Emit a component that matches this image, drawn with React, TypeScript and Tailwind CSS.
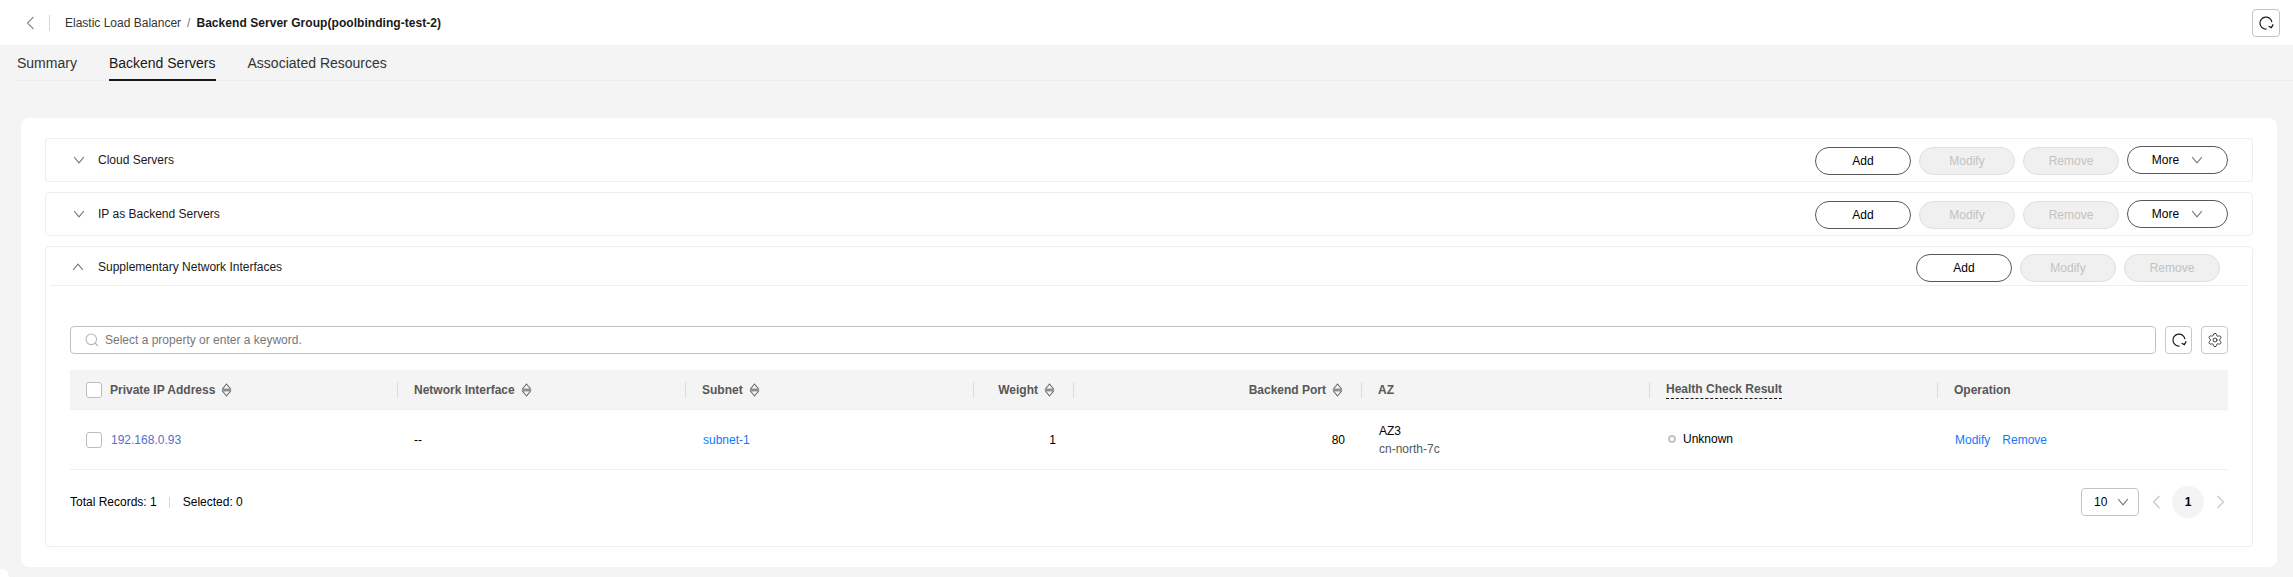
import { Settings } from "lucide-react";

const font = "font-['Liberation_Sans',Arial,sans-serif]";

function Chevron({ dir = "down", className = "" }: { dir?: "down" | "up"; className?: string }) {
  return (
    <svg width="12" height="8" viewBox="0 0 12 8" fill="none" className={className}>
      <path
        d={dir === "down" ? "M1.2 1.2 L6 6.8 L10.8 1.2" : "M1.2 6.8 L6 1.2 L10.8 6.8"}
        stroke="#7a7a7a"
        strokeWidth="1.1"
      />
    </svg>
  );
}

function Side({ dir, color }: { dir: "left" | "right"; color: string }) {
  return (
    <svg width="9" height="14" viewBox="0 0 9 14" fill="none">
      <path d={dir === "left" ? "M7.5 1 L1.5 7 L7.5 13" : "M1.5 1 L7.5 7 L1.5 13"} stroke={color} strokeWidth="1.1" />
    </svg>
  );
}

function Refresh() {
  return (
    <svg width="16" height="16" viewBox="0 0 16 16" fill="none">
      <path d="M13.9 7.2 A6 6 0 1 0 8.6 14" stroke="#191919" strokeWidth="1.2" />
      <path d="M15.2 9.4 L13.4 12.6 L10.6 11.2" stroke="#191919" strokeWidth="1.2" />
    </svg>
  );
}

function SortIcon() {
  return (
    <svg width="11" height="14" viewBox="0 0 11 14" fill="none" className="shrink-0">
      <path d="M1 6.5 L5.5 1 L10 6.5" stroke="#666" strokeWidth="1.1" />
      <path d="M1 7.5 L5.5 13 L10 7.5" stroke="#666" strokeWidth="1.1" />
      <rect x="1.5" y="5.6" width="8" height="2.8" fill="#8c8c8c" />
    </svg>
  );
}

function Btn({ label, disabled = false, className = "" }: { label: string; disabled?: boolean; className?: string }) {
  return (
    <button
      className={`h-7 w-[96px] rounded-full border text-xs ${
        disabled ? "border-[#dfdfdf] bg-[#f0f0f0] text-[#c2c2c2]" : "border-[#575757] bg-white text-black"
      } ${className}`}
    >
      {label}
    </button>
  );
}

function Actions({ more = false }: { more?: boolean }) {
  return (
    <div className="ml-auto flex items-start gap-2">
      <Btn label="Add" className="mt-px" />
      <Btn label="Modify" disabled className="mt-px" />
      <Btn label="Remove" disabled className="mt-px" />
      {more && (
        <button className="flex h-7 w-[101px] items-center justify-center gap-3 rounded-full border border-[#575757] bg-white text-xs text-black">
          More
          <Chevron />
        </button>
      )}
    </div>
  );
}

function HeadCell({ children, right = false, last = false }: { children: React.ReactNode; right?: boolean; last?: boolean }) {
  return (
    <div className="flex h-full items-center">
      <div
        className={`flex h-4 w-full items-center gap-[6px] text-xs font-bold text-[#575757] ${
          last ? "" : "border-r border-[#dcdcdc]"
        } ${right ? "justify-end pr-[18px]" : "pl-4"}`}
      >
        {children}
      </div>
    </div>
  );
}

function CheckBox() {
  return <div className="h-4 w-4 shrink-0 rounded-[3px] border border-[#bdbdbd] bg-white" />;
}

export default function App() {
  const cols = "grid grid-cols-[328px_288px_288px_100px_288px_288px_288px_290px]";

  return (
    <main className={`relative h-[577px] w-[2293px] overflow-hidden bg-[#f4f4f4] text-xs text-black ${font}`}>
      {/* Top bar */}
      <div className="flex h-[45px] items-center bg-white pl-[26px] pr-[13px]">
        <Side dir="left" color="#8a8a8a" />
        <div className="ml-[14px] h-4 w-px bg-[#d9d9d9]" />
        <div className="ml-[15px] flex items-center gap-[6px]">
          <span className="text-[#333]">Elastic Load Balancer</span>
          <span className="text-[#777]">/</span>
          <span className="font-bold tracking-[0.05px] text-[#191919]">Backend Server Group(poolbinding-test-2)</span>
        </div>
        <button className="ml-auto flex h-7 w-7 items-center justify-center rounded-[4px] border border-[#c4c4c4] bg-white">
          <Refresh />
        </button>
      </div>

      {/* Tabs */}
      <div className="ml-[17px] flex h-[36px] gap-[32px] border-b border-[#ececec] text-sm text-[#333]">
        <div className="flex h-[36px] items-center">Summary</div>
        <div className="flex h-[36px] items-center border-b-2 border-[#191919] pt-px text-[#191919]">Backend Servers</div>
        <div className="flex h-[36px] items-center">Associated Resources</div>
      </div>

      {/* Card */}
      <div className="ml-[21px] mt-[37px] h-[449px] w-[2256px] rounded-lg bg-white px-6 pt-5">
        <div className="flex flex-col gap-[10px]">
          <section className="flex h-11 items-center rounded border border-[#eeeeee] pl-[27px] pr-6 text-[#191919]">
            <Chevron />
            <span className="ml-[13px]">Cloud Servers</span>
            <Actions more />
          </section>
          <section className="flex h-11 items-center rounded border border-[#eeeeee] pl-[27px] pr-6 text-[#191919]">
            <Chevron />
            <span className="ml-[13px]">IP as Backend Servers</span>
            <Actions more />
          </section>

          <section className="h-[301px] rounded border border-[#eeeeee]">
            <div className="mx-1 flex h-[39px] items-center border-b border-[#eeeeee] pl-[22px] pr-7 pt-[2px] text-[#191919]">
              <Chevron dir="up" />
              <span className="ml-[14px]">Supplementary Network Interfaces</span>
              <Actions />
            </div>

            <div className="px-6 pt-10">
              {/* Search */}
              <div className="flex items-center gap-[9px]">
                <div className="flex h-7 flex-1 items-center gap-[6px] rounded border border-[#c0c0c0] pl-[14px] text-[#777]">
                  <svg width="14" height="14" viewBox="0 0 14 14" fill="none">
                    <circle cx="6.3" cy="6.3" r="5.3" stroke="#b5b5b5" strokeWidth="1.1" />
                    <path d="M10 10 L13 13" stroke="#b5b5b5" strokeWidth="1.1" />
                  </svg>
                  Select a property or enter a keyword.
                </div>
                <button className="flex h-7 w-[27px] items-center justify-center rounded border border-[#c8c8c8]">
                  <Refresh />
                </button>
                <button className="flex h-7 w-[27px] items-center justify-center rounded border border-[#c8c8c8]">
                  <Settings size={16} strokeWidth={1.2} color="#191919" />
                </button>
              </div>

              {/* Table */}
              <div className={`${cols} mt-4 h-10 items-center border-b border-[#eeeeee] bg-[#f4f4f4]`}>
                <HeadCell>
                  <CheckBox />
                  <span className="ml-[2px]">Private IP Address</span>
                  <SortIcon />
                </HeadCell>
                <HeadCell>
                  Network Interface
                  <SortIcon />
                </HeadCell>
                <HeadCell>
                  Subnet
                  <SortIcon />
                </HeadCell>
                <HeadCell right>
                  Weight
                  <SortIcon />
                </HeadCell>
                <HeadCell right>
                  Backend Port
                  <SortIcon />
                </HeadCell>
                <HeadCell>AZ</HeadCell>
                <HeadCell>
                  <span className="border-b border-dashed border-[#191919] pb-px">Health Check Result</span>
                </HeadCell>
                <HeadCell last>Operation</HeadCell>
              </div>

              <div className={`${cols} h-[60px] items-center border-b border-[#eeeeee]`}>
                <div className="flex items-center gap-[9px] pl-4">
                  <CheckBox />
                  <a className="text-[#526ecc]">192.168.0.93</a>
                </div>
                <div className="pl-4">--</div>
                <div className="pl-[17px]">
                  <a className="text-[#1476ff]">subnet-1</a>
                </div>
                <div className="pr-[18px] text-right">1</div>
                <div className="pr-[17px] text-right">80</div>
                <div className="pl-[17px] leading-[18px]">
                  <div>AZ3</div>
                  <div className="text-[#575757]">cn-north-7c</div>
                </div>
                <div className="-mt-px flex items-center gap-[7px] pl-[18px]">
                  <span className="h-2 w-2 rounded-full border-2 border-[#c4c4c4]" />
                  Unknown
                </div>
                <div className="flex gap-[12px] pl-[17px] text-[#1476ff]">
                  <a>Modify</a>
                  <a>Remove</a>
                </div>
              </div>

              {/* Footer */}
              <div className="flex h-[64px] items-center">
                <span>Total Records: 1</span>
                <span className="ml-3 mr-[13px] h-[11px] w-px bg-[#d9d9d9]" />
                <span>Selected: 0</span>
                <div className="ml-auto flex items-center">
                  <div className="flex h-7 w-[58px] items-center rounded border border-[#c4c4c4] pl-[12px]">
                    10
                    <Chevron className="ml-[10px]" />
                  </div>
                  <div className="ml-[13px]">
                    <Side dir="left" color="#c4c4c4" />
                  </div>
                  <div className="ml-[11px] flex h-8 w-8 items-center justify-center rounded-full bg-[#f4f4f4] font-bold">1</div>
                  <div className="ml-[12px] mr-[3px]">
                    <Side dir="right" color="#c4c4c4" />
                  </div>
                </div>
              </div>
            </div>
          </section>
        </div>
      </div>

      <div className="absolute bottom-0 left-0 h-2 w-[9px] rounded-tr-lg bg-white" />
    </main>
  );
}
